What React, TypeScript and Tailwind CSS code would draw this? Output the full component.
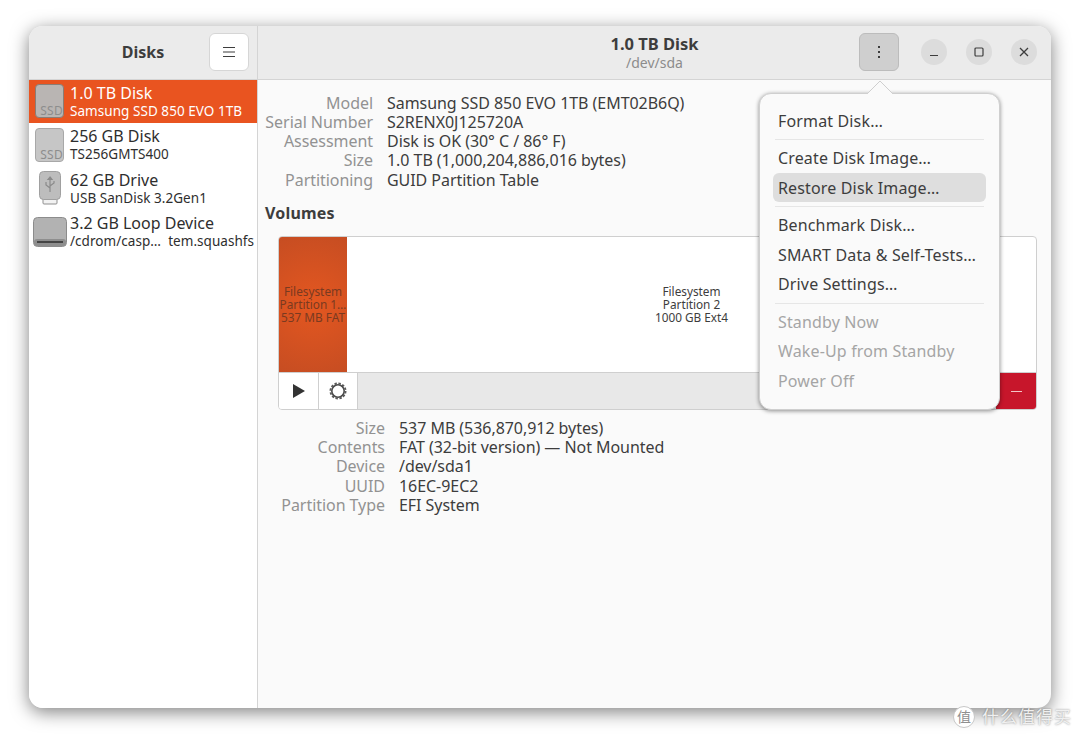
import React from "react";

const font = { fontFamily: '"Noto Sans", "Noto Sans CJK SC", sans-serif' };

function SsdIcon({ selected }: { selected?: boolean }) {
  return (
    <div className={`relative w-[29px] h-[34px] rounded-[4px] border ${selected ? "bg-[#b9b5b3] border-[#8a7d76]" : "bg-[#c6c6c6] border-[#a8a8a8]"}`}>
      <span className="absolute bottom-[-1px] right-0 text-[12px] leading-[15px] tracking-[0.3px] text-[#8d8d8d]">SSD</span>
    </div>
  );
}

function UsbIcon() {
  return (
    <svg width="24" height="34" viewBox="0 0 24 34">
      <rect x="5" y="27" width="14" height="6" rx="1" fill="#f2f2f2" stroke="#8f8f8f" />
      <rect x="1.5" y="0.5" width="21" height="28" rx="4" fill="#bdbdbd" stroke="#a0a0a0" />
      <path d="M12 6v15M12 6l-2 2.5h4zM12 17l-4-3v-3M12 15l4-3v-2" fill="none" stroke="#8a8a8a" strokeWidth="1.2" />
    </svg>
  );
}

function LoopIcon() {
  return (
    <svg width="34" height="30" viewBox="0 0 34 30">
      <rect x="0.5" y="0.5" width="33" height="29" rx="4" fill="#b2b2b2" stroke="#8c8c8c" />
      <rect x="1" y="22" width="32" height="7" rx="3" fill="#8e8e8e" />
      <rect x="4" y="24" width="26" height="2" fill="#454545" />
    </svg>
  );
}

function GearIcon() {
  return (
    <svg width="20" height="20" viewBox="0 0 20 20" fill="none">
      <circle cx="10" cy="10" r="7.6" stroke="#5a5a5a" strokeWidth="1.8" strokeDasharray="2.4 1.6" />
      <circle cx="10" cy="10" r="6.2" stroke="#4a4a4a" strokeWidth="1.6" />
    </svg>
  );
}

const disks = [
  { title: "1.0 TB Disk", sub: "Samsung SSD 850 EVO 1TB", icon: <SsdIcon selected />, selected: true },
  { title: "256 GB Disk", sub: "TS256GMTS400", icon: <SsdIcon /> },
  { title: "62 GB Drive", sub: "USB SanDisk 3.2Gen1", icon: <UsbIcon /> },
  { title: "3.2 GB Loop Device", sub: "/cdrom/casp…  tem.squashfs", icon: <LoopIcon /> },
];

const driveRows = [
  ["Model", "Samsung SSD 850 EVO 1TB (EMT02B6Q)"],
  ["Serial Number", "S2RENX0J125720A"],
  ["Assessment", "Disk is OK (30° C / 86° F)"],
  ["Size", "1.0 TB (1,000,204,886,016 bytes)"],
  ["Partitioning", "GUID Partition Table"],
];

const volumeRows = [
  ["Size", "537 MB (536,870,912 bytes)"],
  ["Contents", "FAT (32-bit version) — Not Mounted"],
  ["Device", "/dev/sda1"],
  ["UUID", "16EC-9EC2"],
  ["Partition Type", "EFI System"],
];

function Details({ rows, labelWidth }: { rows: string[][]; labelWidth: string }) {
  return (
    <div className="flex flex-col">
      {rows.map(([label, value]) => (
        <div key={label} className="flex h-[19.25px] items-center gap-[14px] text-[16px] tracking-[-0.05px] whitespace-nowrap">
          <span className={`${labelWidth} text-right text-[#929292]`}>{label}</span>
          <span className="text-[#3d3d3d]">{value}</span>
        </div>
      ))}
    </div>
  );
}

function MenuItem({ label, active, disabled }: { label: string; active?: boolean; disabled?: boolean }) {
  return (
    <div className={`h-[29.4px] rounded-[6px] px-[5px] flex items-center text-[16px] tracking-[0.15px] whitespace-nowrap ${active ? "bg-[#dedede]" : ""} ${disabled ? "text-[#a5a5a5]" : "text-[#3d3d3d]"}`}>
      {label}
    </div>
  );
}

function Sep() {
  return <div className="h-px bg-[#e6e6e6] mx-[2px] my-[3.65px]" />;
}

function WinButton({ children }: { children: React.ReactNode }) {
  return <button className="w-[26px] h-[26px] rounded-full bg-[#dcdcdc] flex items-center justify-center text-[#3d3d3d]">{children}</button>;
}

export default function App() {
  return (
    <div className="relative w-[1080px] h-[740px] bg-white pt-[26px] pl-[29px] overflow-hidden" style={font}>
      <div className="relative w-[1022px] h-[682px] rounded-[14px] bg-[#fafafa] shadow-[0_4px_18px_rgba(0,0,0,0.5)] flex flex-col overflow-hidden">
        {/* header */}
        <div className="h-[53.5px] shrink-0 flex bg-[#ebebeb] border-b border-[#d4d4d4]">
          <div className="relative w-[229px] shrink-0 border-r border-[#d4d4d4] flex items-center justify-center">
            <span className="font-bold text-[16px] leading-[20px] text-[#3d3d3d]">Disks</span>
            <button className="absolute right-[8px] top-[7px] w-[40px] h-[38px] rounded-[6px] bg-white border border-[#d6d6d6] flex items-center justify-center">
              <svg width="12" height="12" viewBox="0 0 12 12" stroke="#3d3d3d" strokeWidth="1">
                <path d="M0 1.5h12M0 6h12M0 10.5h12" />
              </svg>
            </button>
          </div>
          <div className="relative flex-1 flex flex-col items-center justify-center pt-[2px]">
            <span className="font-bold text-[16.5px] leading-[18px] text-[#3d3d3d] mb-[1px]">1.0 TB Disk</span>
            <span className="text-[14px] leading-[17px] text-[#8c8c8c]">/dev/sda</span>
            <div className="absolute right-[14px] top-[7px] flex items-center gap-[19px]">
              <button className="w-[40px] h-[38px] mr-[3px] rounded-[6px] bg-[#cfcfcf] border border-[#bcbcbc] flex items-center justify-center">
                <svg width="4" height="14" viewBox="0 0 4 14" fill="#3d3d3d">
                  <rect x="1" y="1" width="2" height="2" />
                  <rect x="1" y="6" width="2" height="2" />
                  <rect x="1" y="11" width="2" height="2" />
                </svg>
              </button>
              <WinButton>
                <svg width="10" height="10" viewBox="0 0 10 10"><path d="M1 8.5h8" stroke="#3d3d3d" strokeWidth="1.2" /></svg>
              </WinButton>
              <WinButton>
                <svg width="10" height="10" viewBox="0 0 10 10" fill="none"><rect x="1" y="1" width="8" height="8" rx="1" stroke="#3d3d3d" strokeWidth="1.2" /></svg>
              </WinButton>
              <WinButton>
                <svg width="10" height="10" viewBox="0 0 10 10"><path d="M1 1l8 8M9 1l-8 8" stroke="#3d3d3d" strokeWidth="1.3" /></svg>
              </WinButton>
            </div>
          </div>
        </div>

        <div className="flex-1 flex min-h-0">
          {/* sidebar */}
          <div className="w-[229px] shrink-0 bg-white border-r border-[#d4d4d4]">
            {disks.map((d) => (
              <div key={d.title} className={`h-[43.5px] flex items-center ${d.selected ? "bg-[#e95420] text-white" : "text-[#2e2e2e]"}`}>
                <div className="w-[41px] shrink-0 flex justify-center">{d.icon}</div>
                <div className="whitespace-pre">
                  <div className="text-[16px] leading-[20px]">{d.title}</div>
                  <div className="text-[13.5px] leading-[17px] tracking-[0.05px]">{d.sub}</div>
                </div>
              </div>
            ))}
          </div>

          {/* main */}
          <div className="flex-1 min-w-0 pt-[13.5px] pl-[7px] pr-[14px]">
            <Details rows={driveRows} labelWidth="w-[108px]" />
            <div className="mt-[14px] mb-[13px] font-bold text-[16px] tracking-[0.2px] leading-[20px] text-[#3d3d3d]">Volumes</div>
            <div className="ml-[13px] h-[174px] rounded-[4px] border border-[#cfcfcf] bg-white flex flex-col overflow-hidden">
              <div className="flex-1 flex min-h-0">
                <div className="w-[68px] shrink-0 flex items-center justify-center text-center text-[11.8px] leading-[13.4px] text-[#7a3a20] whitespace-nowrap overflow-hidden bg-[radial-gradient(circle,#e45720,#c64d22)]">
                  <div>Filesystem<br />Partition 1…<br />537 MB FAT</div>
                </div>
                <div className="flex-1 flex items-center justify-center text-center text-[11.8px] leading-[13.4px] text-[#3d3d3d]">
                  <div>Filesystem<br />Partition 2<br />1000 GB Ext4</div>
                </div>
              </div>
              <div className="h-[37px] shrink-0 border-t border-[#cfcfcf] bg-[#e8e8e8] flex">
                <div className="w-[40px] bg-white border-r border-[#cfcfcf] flex items-center justify-center">
                  <svg width="12" height="14" viewBox="0 0 12 14" fill="#333"><path d="M0 0l12 7-12 7z" /></svg>
                </div>
                <div className="w-[39px] bg-white border-r border-[#cfcfcf] flex items-center justify-center">
                  <GearIcon />
                </div>
                <div className="flex-1" />
                <div className="w-[40px] bg-[#c7162b] flex items-center justify-center">
                  <div className="w-[11px] h-[1.5px] bg-[#f3c6c6]" />
                </div>
              </div>
            </div>
            <div className="mt-[8px]">
              <Details rows={volumeRows} labelWidth="w-[120px]" />
            </div>
          </div>
        </div>

        {/* popover */}
        <div className="absolute left-[730px] top-[67px] w-[241px] h-[317px] rounded-[12px] bg-[#fafafa] border border-[#cfcfcf] shadow-[0_1px_4px_rgba(0,0,0,0.45)] px-[13px] pt-[12px]">
          <svg className="absolute left-[107px] top-[-14px]" width="26" height="15" viewBox="0 0 26 15">
            <path d="M0 14L13 1l13 13" fill="#fafafa" stroke="#cfcfcf" />
            <rect x="1" y="14" width="24" height="1" fill="#fafafa" />
          </svg>
          <MenuItem label="Format Disk…" />
          <Sep />
          <MenuItem label="Create Disk Image…" />
          <MenuItem label="Restore Disk Image…" active />
          <Sep />
          <MenuItem label="Benchmark Disk…" />
          <MenuItem label="SMART Data & Self-Tests…" />
          <MenuItem label="Drive Settings…" />
          <Sep />
          <MenuItem label="Standby Now" disabled />
          <MenuItem label="Wake-Up from Standby" disabled />
          <MenuItem label="Power Off" disabled />
        </div>
      </div>

      {/* watermark */}
      <div className="absolute right-[8px] bottom-[12px] flex items-center gap-[7px]">
        <span className="w-[22px] h-[22px] rounded-full bg-white border border-[#c8c8c8] text-[#8f8f8f] text-[14px] leading-none flex items-center justify-center">值</span>
        <span className="text-[17px] leading-[22px] tracking-[1px] text-[#f0f0f0] [text-shadow:0_0_2px_rgba(0,0,0,0.45)]">什么值得买</span>
      </div>
    </div>
  );
}
